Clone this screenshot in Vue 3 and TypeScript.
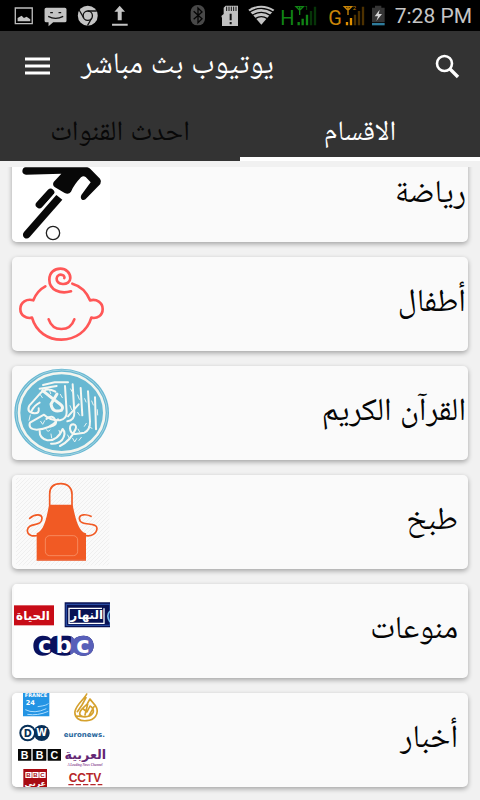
<script setup lang="ts">
import { ref } from 'vue'

type Art = 'sport' | 'kids' | 'quran' | 'cooking' | 'variety' | 'news'

interface Category {
  id: Art
  title: string
  viewBox: string
  inset?: boolean
}

const tabs = ['احدث القنوات', 'الاقسام']
const activeTab = ref(1)

const categories: Category[] = [
  { id: 'sport', title: 'رياضة', viewBox: '36 -36 294 282' },
  { id: 'kids', title: 'أطفال', viewBox: '36 21 294 282' },
  { id: 'quran', title: 'القرآن الكريم', viewBox: '36 18 294 282' },
  { id: 'cooking', title: 'طبخ', viewBox: '36 21 294 282', inset: true },
  { id: 'variety', title: 'منوعات', viewBox: '36 18 294 282', inset: true },
  { id: 'news', title: 'أخبار', viewBox: '36 24 294 282', inset: true },
]
</script>

<template>
  <div class="screen">
    <div class="status">
      <svg class="status-left" viewBox="0 0 400 90" aria-hidden="true">
        <path d="M46 24H97V71H46Z" fill="none" stroke="#bdbdbd" stroke-width="4" />
        <path d="M53 64V54L65 47L72 54L80 50L91 58V64Z" fill="#c4c4c4" />
        <path d="M139 23H195Q200 23 200 28V62Q200 67 195 67H160L146 79V67H139Q134 67 134 62V28Q134 23 139 23Z" fill="#c4c4c4" />
        <path d="M145 49Q167 61 190 49M151 38H159M176 38H184" fill="none" stroke="#111" stroke-width="4" />
        <circle cx="264" cy="47" r="30" fill="#c4c4c4" />
        <circle cx="264" cy="47" r="14" fill="#c4c4c4" stroke="#111" stroke-width="4" />
        <path d="M264 33H291M252 54L238 30M276 54L263 77" stroke="#111" stroke-width="4" />
        <path d="M360 17L376 35H366V61H354V35H344ZM337 71H384V77H337Z" fill="#c4c4c4" />
      </svg>
      <div class="status-right">
        <svg class="w26" viewBox="18 0 78 90" aria-hidden="true">
          <rect x="29" y="15" width="43" height="61" rx="20" fill="#484848" />
          <path d="M38 34L63 56L51 68V24L63 36L38 58" fill="none" stroke="#050505" stroke-width="4" />
        </svg>
        <svg class="w30" viewBox="96 0 90 90" aria-hidden="true">
          <path d="M134 17H171V78H123V54L121 48L128 42V23Z" fill="#c0c0c0" />
          <path d="M137 20V33M144 20V33M151 20V33M158 20V33M165 20V33" stroke="#111" stroke-width="3" />
          <path d="M149 41V61M149 66V73" stroke="#111" stroke-width="6" />
        </svg>
        <svg class="w34" viewBox="186 0 102 90" aria-hidden="true">
          <path d="M241 74L202 29Q241 5 280 29Z" fill="#c4c4c4" />
          <path d="M206 36Q241 14 276 36M214 46Q241 28 268 46M223 56Q241 44 259 56" fill="none" stroke="#050505" stroke-width="4" />
        </svg>
        <svg class="w46" viewBox="288 0 138 90" aria-hidden="true">
          <text x="298" y="76" class="net" fill="#118415">H</text>
          <path d="M345 20H367L356 31ZM356 20V45" fill="none" stroke="#118415" stroke-width="4" />
          <text x="371" y="31" class="sim" fill="#118415">1</text>
          <path d="M353 66V76M365 56V76M378 44V76" stroke="#118415" stroke-width="7" />
          <path d="M390 33V76M402 20V76" stroke="#063508" stroke-width="7" />
        </svg>
        <svg class="w46" viewBox="426 0 138 90" aria-hidden="true">
          <text x="442" y="76" class="net" fill="#c98508">G</text>
          <path d="M490 20H512L501 31ZM501 20V45" fill="none" stroke="#c98508" stroke-width="4" />
          <text x="515" y="31" class="sim" fill="#c98508">2</text>
          <path d="M498 66V76M510 54V76" stroke="#e09000" stroke-width="7" />
          <path d="M522 44V76M534 33V76M546 20V76" stroke="#4d3100" stroke-width="7" />
        </svg>
        <svg class="w26" viewBox="564 0 78 90" aria-hidden="true">
          <path d="M573 23H582V17H601V23H611V67H573Z" fill="#353535" />
          <rect x="573" y="69" width="38" height="7" fill="#2e7c9c" />
          <path d="M596 29L581 49H591L586 63L603 42H593Z" fill="#d5d5d5" />
        </svg>
        <span class="clock">7:28 PM</span>
      </div>
    </div>

    <header class="appbar">
      <div class="toolbar">
        <button class="icon" type="button" aria-label="القائمة">
          <svg viewBox="0 0 26 26" aria-hidden="true">
            <path d="M1 6H26M1 13H26M1 20H26" stroke="#fff" stroke-width="3" />
          </svg>
        </button>
        <h1><bdi>يوتيوب بث مباشر</bdi></h1>
        <button class="icon" type="button" aria-label="بحث">
          <svg viewBox="0 0 26 26" aria-hidden="true">
            <circle cx="10.5" cy="10.5" r="7.5" fill="none" stroke="#fff" stroke-width="2.6" />
            <path d="M16 16L24 24" stroke="#fff" stroke-width="3.4" />
          </svg>
        </button>
      </div>
      <nav class="tabs">
        <button
          v-for="(tab, i) in tabs"
          :key="tab"
          type="button"
          dir="rtl"
          class="tab"
          :class="{ active: i === activeTab }"
          @click="activeTab = i"
        >{{ tab }}</button>
      </nav>
    </header>

    <main class="viewport">
      <ul class="list">
        <li v-for="c in categories" :key="c.id">
          <a href="#" class="card" :class="{ inset: c.inset }">
            <svg class="thumb" :viewBox="c.viewBox" aria-hidden="true">
              <g v-if="c.id === 'sport'">
                <rect x="36" y="-36" width="294" height="282" fill="#fff" />
                <circle cx="220" cy="-10" r="18" fill="#080808" />
                <path d="M77 22H262Q268 23 272 28L300 56Q306 64 301 72L260 114Q254 122 246 119Q240 114 244 105L272 67L257 51Q250 46 243 52Q222 74 213 95Q206 105 194 99L165 82Q156 76 161 66L184 41L78 44Q67 43 67 33Q68 23 77 22Z" fill="#080808" />
                <path d="M152 97L118 134" stroke="#080808" stroke-width="22" stroke-linecap="round" />
                <path d="M169 105L187 119L89 231Q81 239 73 233Q65 226 72 216Z" fill="#080808" />
                <path d="M165 101L126 147" stroke="#fff" stroke-width="4" />
                <circle cx="159" cy="219" r="20" fill="#fff" stroke="#222" stroke-width="4" />
              </g>

              <g v-else-if="c.id === 'kids'" fill="none" stroke="#ff5757" stroke-width="8" stroke-linecap="round" stroke-linejoin="round">
                <path d="M136 109Q111 122 100 151C80 145 61 157 61 177C61 196 78 207 96 203C108 246 145 269 184 269C226 269 262 244 274 203C292 207 308 196 308 177C308 157 290 146 270 151C260 126 242 108 217 101" />
                <path d="M146 208Q156 237 184 237Q213 237 223 208" />
                <path d="M213 124C180 134 148 119 148 89C148 68 163 56 181 56C199 56 211 69 211 84C211 96 200 103 188 102C176 101 169 94 170 85C171 76 180 72 187 75C193 77 194 82 193 84" />
              </g>

              <g v-else-if="c.id === 'quran'">
                <ellipse cx="185" cy="158" rx="142" ry="132" fill="#68b8d2" />
                <ellipse cx="185" cy="158" rx="128" ry="119" fill="none" stroke="#f3f5ef" stroke-width="8" />
                <ellipse cx="185" cy="158" rx="137" ry="128" fill="none" stroke="#bfe0e8" stroke-width="2" />
                <g fill="none" stroke="#f5f7f2" stroke-linecap="round" stroke-linejoin="round" stroke-width="6">
                  <path d="M129 75L164 67H204M119 86L170 78M166 95Q138 79 120 101L88 137Q78 157 103 160Q119 161 116 145" />
                  <path d="M128 92Q157 116 180 132Q193 142 184 151Q157 160 153 132L171 102" stroke-width="9" />
                  <path d="M195 78L200 157Q200 177 180 181Q151 182 132 164L90 188Q83 207 110 209Q151 207 174 178" />
                  <path d="M218 73L223 158Q224 181 202 184M242 84L247 166M264 94L270 184Q271 210 253 218L226 222Q211 222 210 205Q210 193 220 193Q231 195 227 207Q211 243 180 258M285 112L288 208" />
                  <path d="M119 213Q118 235 142 241Q173 243 188 207Q200 219 186 240Q174 253 153 251M139 177Q158 162 166 181Q174 195 150 200M94 154Q103 136 119 128M204 169L236 133" />
                </g>
                <g fill="none" stroke="#e8f4f3" stroke-width="3" stroke-linecap="round">
                  <path d="M119 101L127 113M148 89L152 101M181 103L187 113M212 87L218 98M233 105L238 118M254 116L258 126M275 123L280 135M292 149L293 165M91 165L87 181M139 209Q144 219 150 210M218 235L224 246L230 236M237 241L244 232M203 225L208 235M253 199L259 190M122 184L128 193L134 182M153 222L155 234M177 211L180 220M234 207L239 216M210 137L215 149M233 157L239 166M266 200L276 205" />
                </g>
              </g>

              <g v-else-if="c.id === 'cooking'">
                <defs>
                  <pattern id="hatch" width="12" height="12" patternUnits="userSpaceOnUse">
                    <path d="M-2 2L2 -2M0 12L12 0M10 14L14 10" stroke="#efefef" stroke-width="3" />
                  </pattern>
                </defs>
                <rect x="48" y="29" width="280" height="263" fill="url(#hatch)" />
                <path d="M149 111V78C149 58 161 47 182 47C204 47 216 60 216 78V111M89 151C104 137 126 137 126 151C126 178 84 162 82 187C82 203 100 207 116 201M273 145C258 138 239 138 238 151C239 178 288 159 291 180C291 198 272 208 251 201" fill="none" stroke="#f15a24" stroke-width="5" stroke-linecap="round" />
                <path d="M147 110H218C226 154 237 192 258 196V278H110V196C132 188 140 150 147 110Z" fill="#f15a24" />
                <rect x="136" y="203" width="97" height="60" rx="13" fill="none" stroke="#f9a079" stroke-width="2" />
                <path d="M110 276H258" stroke="#e77755" stroke-width="2" />
              </g>

              <g v-else-if="c.id === 'variety'">
                <rect x="42" y="18" width="288" height="282" fill="#fefefe" />
                <rect x="42" y="82" width="120" height="60" fill="#c80c17" />
                <text x="99" y="126" class="logo-ar" fill="#fff">الحياة</text>
                <path d="M194 73H330V148H194Z" fill="#081253" />
                <path d="M199 79H330V142H199Z" fill="none" stroke="#284aa0" stroke-width="4" />
                <path d="M306 91H207V136H312V91" fill="none" stroke="#fff" stroke-width="4" />
                <text x="260" y="124" class="logo-ar" fill="#fff">النهار</text>
                <path d="M330 99Q317 113 330 132" fill="none" stroke="#77bce9" stroke-width="5" />
                <path d="M128 173Q146 173 153 183Q158 173 173 173H203Q218 173 222 184Q232 173 251 173C270 173 281 187 281 203C281 220 269 233 251 233Q232 233 222 222Q214 233 194 233Q168 233 155 222Q146 233 128 233C110 233 100 220 100 203C100 186 111 173 128 173Z" fill="#09115e" />
                <path d="M213 175Q218 177 222 184Q232 173 251 173C270 173 281 187 281 203C281 220 269 233 251 233Q232 233 222 222Q218 228 210 231Z" fill="#585fb9" />
                <text x="134 191 249" y="225" class="logo-cbc" fill="#fff">cbc</text>
              </g>

              <g v-else>
                <rect x="36" y="24" width="294" height="282" fill="#fff" />
                <path d="M69 24H148V94H69Z" fill="#2394e4" />
                <text x="108" y="37" class="logo-france" fill="#fff">FRANCE</text>
                <text x="91" y="60" class="logo-24" fill="#fff">24</text>
                <path d="M76 74Q103 88 139 71M82 88Q113 93 145 79M113 65Q144 61 145 55" fill="none" stroke="#a9dcff" stroke-width="3" />
                <g fill="none" stroke="#d5a12d" stroke-linecap="round" stroke-linejoin="round" stroke-width="5">
                  <path d="M260 27C253 43 230 57 225 79C222 99 240 109 260 107C284 105 296 88 290 69C285 56 275 51 270 42L262 56C252 68 239 73 239 86C240 99 268 99 278 85C284 75 276 66 270 63L261 81L250 72M258 38L246 60L232 80M263 57L255 90M282 65L267 92M229 93L248 95" />
                </g>
                <circle cx="83" cy="144" r="25" fill="#072f57" />
                <circle cx="125" cy="144" r="24" fill="#072f57" />
                <circle cx="83" cy="144" r="19" fill="#fff" />
                <text x="83" y="155" class="logo-dw" fill="#072f57">D</text>
                <text x="125" y="154" class="logo-dw" fill="#fff">W</text>
                <text x="253" y="156" class="logo-euro" fill="#27669c">euronews.</text>
                <path d="M54 192H94V227H54ZM98 192H139V227H98ZM143 192H183V227H143Z" fill="#080808" />
                <g class="logo-bbc" fill="#fff">
                  <text x="74" y="221">B</text><text x="119" y="221">B</text><text x="163" y="221">C</text>
                </g>
                <text x="256" y="222" class="logo-arabiya" fill="#642774">العربية</text>
                <text x="255" y="242" class="logo-tag" fill="#8b4a96">A Leading News Channel</text>
                <path d="M70 252H141V306H70Z" fill="#a80b13" />
                <path d="M76 261H95V279H76ZM97 261H116V279H97ZM118 261H137V279H118Z" fill="#fff" />
                <g class="logo-bbc-small" fill="#a80b13">
                  <text x="85" y="276">B</text><text x="106" y="276">B</text><text x="127" y="276">C</text>
                </g>
                <text x="106" y="302" class="logo-bbc-ar" fill="#fff">عربي</text>
                <text x="255" y="292" class="logo-cctv" fill="#b6262a">CCTV</text>
                <path d="M205 299H307" stroke="#b6262a" stroke-width="4" stroke-dasharray="16 6" />
              </g>
            </svg>
            <span class="label" dir="rtl">{{ c.title }}</span>
          </a>
        </li>
      </ul>
    </main>
  </div>
</template>

<style>
body {
  margin: 0;
  background: #f1f1f1;
}
</style>

<style scoped>
.screen {
  height: 100vh;
  display: flex;
  flex-direction: column;
  overflow: hidden;
  background: #f1f1f1;
  font-family: "Noto Sans", "Noto Naskh Arabic", "Noto Sans Arabic", "DejaVu Sans", sans-serif;
}
.status {
  height: 31px;
  flex: none;
  display: flex;
  justify-content: space-between;
  background: #000;
  padding-right: 8px;
}
.status svg {
  height: 30px;
  display: block;
}
.status-left { width: 133px; }
.status-right {
  display: flex;
}
.w26 { width: 26px; }
.w30 { width: 30px; }
.w34 { width: 34px; }
.w46 { width: 46px; }
.clock {
  font: 21px/32px Roboto, sans-serif;
  color: #c6c6c6;
  white-space: nowrap;
}
.net { font: 60px Roboto, sans-serif; }
.sim { font: 18px Roboto, sans-serif; }
.appbar {
  flex: none;
  height: 130px;
  display: flex;
  flex-direction: column;
  background: #333;
  color: #fff;
}
.toolbar {
  height: 70px;
  display: flex;
  align-items: center;
  padding: 0 20px 0 24px;
}
.toolbar h1 {
  flex: 1;
  margin: 0;
  padding: 0 0 8px 31px;
  font-size: 30px;
  font-weight: 400;
  line-height: 40px;
  white-space: nowrap;
}
.icon {
  width: 26px;
  height: 26px;
  padding: 0;
  border: 0;
  background: none;
}
.icon svg {
  display: block;
  width: 26px;
  height: 26px;
}
.tabs {
  flex: 1;
  display: flex;
}
.tab {
  flex: 1;
  padding: 0;
  border: 0;
  border-bottom: 4px solid transparent;
  background: none;
  color: #080808;
  font-family: inherit;
  font-size: 28px;
  line-height: 40px;
}
.tab.active {
  color: #fff;
  border-color: #fff;
}
.viewport {
  flex: 1;
  min-height: 0;
  margin-top: 6px;
  overflow: hidden;
}
.list {
  list-style: none;
  margin: -19px 0 0;
  padding: 0 12px;
  display: grid;
  gap: 15px;
}
.card {
  height: 94px;
  display: flex;
  align-items: center;
  justify-content: space-between;
  padding-right: 2px;
  border-radius: 5px;
  background: #fafafa;
  box-shadow: 0 2px 5px rgba(0, 0, 0, 0.32);
  color: #050505;
  text-decoration: none;
}
.card.inset { padding-right: 10px; }
.thumb {
  width: 98px;
  height: 94px;
  flex: none;
  display: block;
  border-radius: 5px 0 0 5px;
}
.thumb text { text-anchor: middle; }
.label {
  padding-bottom: 10px;
  font-size: 32px;
  line-height: 40px;
}
.logo-ar { font: bold 36px "DejaVu Sans", sans-serif; }
.logo-cbc { font: bold 68px "DejaVu Sans", sans-serif; }
.logo-france { font: bold 15px "DejaVu Sans", sans-serif; }
.logo-24 { font: bold 20px "DejaVu Sans", sans-serif; }
.logo-dw { font: bold 29px "DejaVu Sans", sans-serif; }
.logo-euro { font: bold 21px "DejaVu Sans", sans-serif; }
.logo-bbc { font: bold 32px "Liberation Sans", sans-serif; }
.logo-bbc-small { font: bold 18px "Liberation Sans", sans-serif; }
.logo-bbc-ar { font: bold 24px "DejaVu Sans", sans-serif; }
.logo-arabiya { font: bold 38px "DejaVu Sans", sans-serif; }
.logo-tag { font: italic bold 10px "Liberation Serif", serif; }
.logo-cctv { font: bold 36px "Liberation Sans", sans-serif; }
</style>
